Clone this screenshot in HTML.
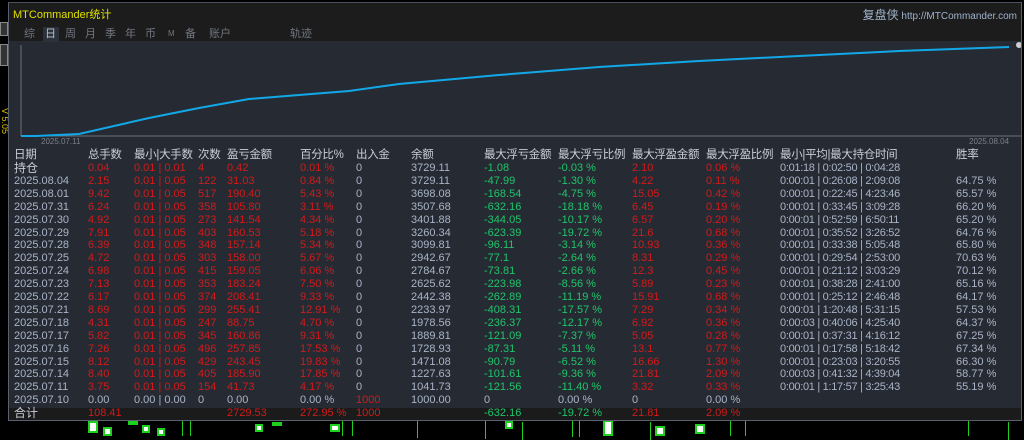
<!DOCTYPE html>
<html><head><meta charset="utf-8"><style>
*{margin:0;padding:0;box-sizing:border-box}
body{width:1024px;height:436px;background:#000;position:relative;overflow:hidden;font-family:"Liberation Sans","Noto Sans CJK SC",sans-serif;font-size:11px}
.p{position:absolute;left:8px;top:2px;width:1014px;height:419px;background:#262b33;border:1px solid #5a6070;border-top:1px solid #4a5060;overflow:hidden}
.hd{position:absolute;left:0;top:0;width:100%;height:38px;background:#1c1c1c}
.t{position:absolute;white-space:nowrap;line-height:13px}
.g{color:#a9b4c8}.r{color:#d21a1a}.gr{color:#1fc46a}.w{color:#c8cdd8}
.tot{position:absolute;left:0;top:405px;width:100%;height:14px;background:#1b1b1b}
.c{position:absolute;border:2px solid #1fd11f;background:#fff}
.l{position:absolute;width:1px;background:#1fd11f}
.tb{position:absolute;top:24px;color:#707680;font-size:11px;line-height:14px}
</style></head><body>
<div style="position:absolute;left:0;top:22px;width:8px;height:14px;border:1px solid #888;background:#333"></div>
<div style="position:absolute;left:0;top:44px;width:8px;height:22px;border:1px solid #888;background:#333"></div>
<div style="position:absolute;left:0;top:108px;color:#d8c000;font-size:9px;writing-mode:vertical-rl">V 5.05</div>
<div id="cd"></div>
<div class="p">
<div class="hd"></div>
<div class="t" style="left:4px;top:6px;color:#e0e000;font-size:11px">MTCommander统计</div>
<div class="t" style="right:4px;top:6px;color:#9fb3cc;font-size:10px"><span style="font-size:12px">复盘侠</span> http://MTCommander.com</div>
<div style="position:absolute;left:34px;top:24px;width:16px;height:15px;background:#2c323c"></div>
<div class="tb" style="left:15px">综</div>
<div class="tb" style="left:36px;color:#b8c0cc">日</div>
<div class="tb" style="left:56px">周</div>
<div class="tb" style="left:76px">月</div>
<div class="tb" style="left:96px">季</div>
<div class="tb" style="left:116px">年</div>
<div class="tb" style="left:136px">币</div>
<div class="tb" style="left:159px;font-size:8px">M</div>
<div class="tb" style="left:176px">备</div>
<div class="tb" style="left:200px">账户</div>
<div class="tb" style="left:281px">轨迹</div>
<svg style="position:absolute;left:0;top:38px" width="1012" height="110">
<line x1="12" y1="4" x2="12" y2="95" stroke="#6a707a"/>
<line x1="12" y1="95" x2="1012" y2="95" stroke="#6a707a"/>
<polyline fill="none" stroke="#12a8e8" stroke-width="2" points="12,95 27,95 70,93 140,77 190,67 240,58 290,54 340,50 390,43 490,34 590,26 690,20 790,15 890,10 1000,6"/>
<circle cx="1010" cy="4" r="3" fill="#ccc"/>
</svg>
<div class="t" style="left:32px;top:132px;color:#7a808a;font-size:8px">2025.07.11</div>
<div class="t" style="left:960px;top:132px;color:#7a808a;font-size:8px">2025.08.04</div>
<div class="tot"></div>
<div id="tb"></div>
</div>
<script>
var cols=[5,79,125,189,218,291,347,402,475,549,623,697,771,947];
var H=["日期","总手数","最小|大手数","次数","盈亏金额","百分比%","出入金","余额","最大浮亏金额","最大浮亏比例","最大浮盈金额","最大浮盈比例","最小|平均|最大持仓时间","胜率"];
var R=[
["持仓","0.04","0.01 | 0.01","4","0.42","0.01 %","0","3729.11","-1.08","-0.03 %","2.10","0.06 %","0:01:18 | 0:02:50 | 0:04:28",""],
["2025.08.04","2.15","0.01 | 0.05","122","31.03","0.84 %","0","3729.11","-47.99","-1.30 %","4.22","0.11 %","0:00:01 | 0:26:08 | 2:09:08","64.75 %"],
["2025.08.01","9.42","0.01 | 0.05","517","190.40","5.43 %","0","3698.08","-168.54","-4.75 %","15.05","0.42 %","0:00:01 | 0:22:45 | 4:23:46","65.57 %"],
["2025.07.31","6.24","0.01 | 0.05","358","105.80","3.11 %","0","3507.68","-632.16","-18.18 %","6.45","0.19 %","0:00:01 | 0:33:45 | 3:09:28","66.20 %"],
["2025.07.30","4.92","0.01 | 0.05","273","141.54","4.34 %","0","3401.88","-344.05","-10.17 %","6.57","0.20 %","0:00:01 | 0:52:59 | 6:50:11","65.20 %"],
["2025.07.29","7.91","0.01 | 0.05","403","160.53","5.18 %","0","3260.34","-623.39","-19.72 %","21.6","0.68 %","0:00:01 | 0:35:52 | 3:26:52","64.76 %"],
["2025.07.28","6.39","0.01 | 0.05","348","157.14","5.34 %","0","3099.81","-96.11","-3.14 %","10.93","0.36 %","0:00:01 | 0:33:38 | 5:05:48","65.80 %"],
["2025.07.25","4.72","0.01 | 0.05","303","158.00","5.67 %","0","2942.67","-77.1","-2.64 %","8.31","0.29 %","0:00:01 | 0:29:54 | 2:53:00","70.63 %"],
["2025.07.24","6.98","0.01 | 0.05","415","159.05","6.06 %","0","2784.67","-73.81","-2.66 %","12.3","0.45 %","0:00:01 | 0:21:12 | 3:03:29","70.12 %"],
["2025.07.23","7.13","0.01 | 0.05","353","183.24","7.50 %","0","2625.62","-223.98","-8.56 %","5.89","0.23 %","0:00:01 | 0:38:28 | 2:41:00","65.16 %"],
["2025.07.22","6.17","0.01 | 0.05","374","208.41","9.33 %","0","2442.38","-262.89","-11.19 %","15.91","0.68 %","0:00:01 | 0:25:12 | 2:46:48","64.17 %"],
["2025.07.21","8.69","0.01 | 0.05","299","255.41","12.91 %","0","2233.97","-408.31","-17.57 %","7.29","0.34 %","0:00:01 | 1:20:48 | 5:31:15","57.53 %"],
["2025.07.18","4.31","0.01 | 0.05","247","88.75","4.70 %","0","1978.56","-236.37","-12.17 %","6.92","0.36 %","0:00:03 | 0:40:06 | 4:25:40","64.37 %"],
["2025.07.17","5.82","0.01 | 0.05","345","160.86","9.31 %","0","1889.81","-121.09","-7.37 %","5.05","0.28 %","0:00:01 | 0:37:31 | 4:16:12","67.25 %"],
["2025.07.16","7.26","0.01 | 0.05","496","257.85","17.53 %","0","1728.93","-87.31","-5.11 %","13.1","0.77 %","0:00:01 | 0:17:58 | 5:18:42","67.34 %"],
["2025.07.15","8.12","0.01 | 0.05","429","243.45","19.83 %","0","1471.08","-90.79","-6.52 %","16.66","1.30 %","0:00:01 | 0:23:03 | 3:20:55","66.30 %"],
["2025.07.14","8.40","0.01 | 0.05","405","185.90","17.85 %","0","1227.63","-101.61","-9.36 %","21.81","2.09 %","0:00:03 | 0:41:32 | 4:39:04","58.77 %"],
["2025.07.11","3.75","0.01 | 0.05","154","41.73","4.17 %","0","1041.73","-121.56","-11.40 %","3.32","0.33 %","0:00:01 | 1:17:57 | 3:25:43","55.19 %"],
["2025.07.10","0.00","0.00 | 0.00","0","0.00","0.00 %","1000","1000.00","0","0.00 %","0","0.00 %","",""],
["合计","108.41","","","2729.53","272.95 %","1000","","-632.16","-19.72 %","21.81","2.09 %","",""]];
var cl=["g","r","r","r","r","r","g","g","gr","gr","r","r","g","g"];
var s="";
H.forEach(function(h,i){s+='<div class="t w" style="left:'+cols[i]+'px;top:146px;font-size:11.5px;letter-spacing:-0.3px">'+h+'</div>'});
R.forEach(function(r,j){var y=159+j*12.9;if(j==19)y=404;
r.forEach(function(v,i){var c=cl[i];if(j==18){c=(i==6)?"r":"g";}if(j==19&&i==6)c="r";if(i==0&&(j==0||j==19))c="w";
var fs=(i==0&&(j==0||j==19))?"font-size:12px;":"";
if(i==12)fs+="letter-spacing:-0.3px;";
s+='<div class="t '+c+'" style="'+fs+'left:'+cols[i]+'px;top:'+y+'px">'+v+'</div>'})});
document.getElementById("tb").innerHTML=s;
var cd=[[88,421,10,12],[103,427,9,9],[128,421,10,3],[142,425,8,8],[157,428,8,8],[182,418,0,0],[190,418,0,0],[255,424,8,8],[272,422,10,4],[330,424,10,8],[342,418,0,0],[352,418,0,0],[417,420,0,0],[485,421,0,0],[505,421,8,8],[522,422,0,0],[572,419,0,0],[579,419,0,0],[603,420,10,16],[650,422,0,0],[655,426,10,10],[695,424,10,10],[730,418,0,0],[745,418,0,0],[968,418,0,0],[1008,422,0,0],[1035,421,8,10],[1058,421,10,8]];
var c2="";cd.forEach(function(a){if(a[2]==0)c2+='<div class="l" style="left:'+a[0]+'px;top:'+a[1]+'px;height:18px"></div>';else c2+='<div class="c" style="left:'+a[0]+'px;top:'+a[1]+'px;width:'+a[2]+'px;height:'+a[3]+'px"></div>'});
document.getElementById("cd").innerHTML=c2;
</script>
</body></html>
